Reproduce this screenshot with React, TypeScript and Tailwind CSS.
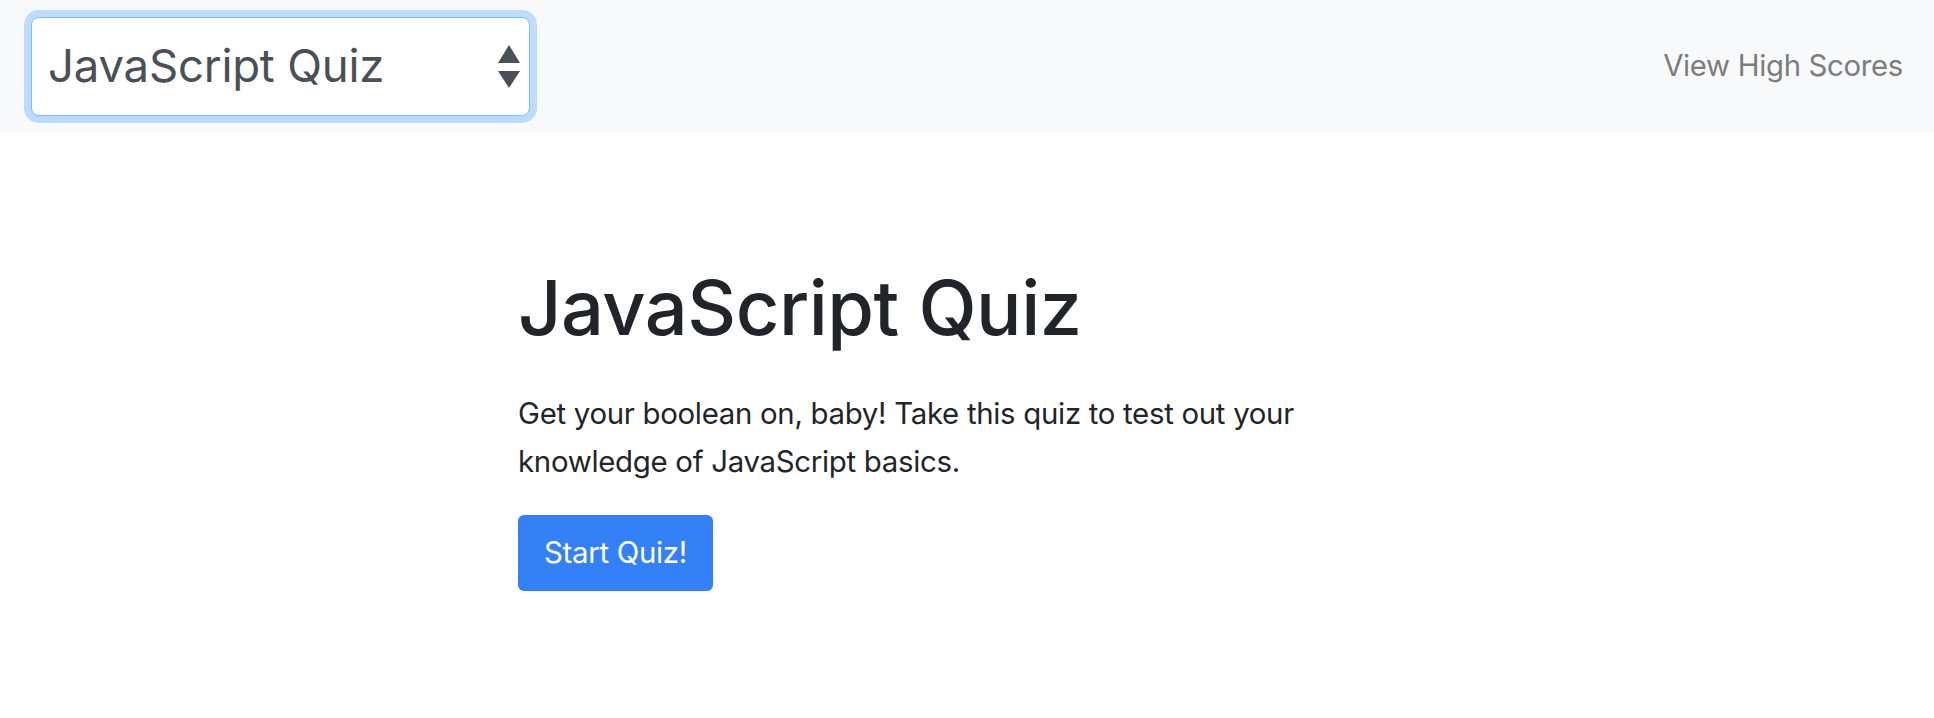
import { useState } from "react";

const quizzes = ["JavaScript Quiz", "HTML Quiz", "CSS Quiz"];

export default function App() {
  const [quiz, setQuiz] = useState(quizzes[0]);

  return (
    <div className="min-h-screen bg-white font-['Inter',_'Noto_Sans',_sans-serif] text-[#212529]">
      {/* Navbar */}
      <nav className="h-[132px] bg-[#f8f9fa] flex items-center justify-between pl-[31px] pr-[31px]">
        <div className="relative">
          <select
            value={quiz}
            onChange={(e) => setQuiz(e.target.value)}
            className="appearance-none w-[499px] h-[99px] bg-white border border-[#80bdff] rounded-[8px] ring-[7px] ring-[#80bdff]/50 outline-none pl-[16px] pr-[40px] text-[45.5px] text-[#495057] tracking-[-0.2px]"
          >
            {quizzes.map((q) => (
              <option key={q} value={q}>{q}</option>
            ))}
          </select>
          <svg
            className="absolute right-[10px] top-[28px] pointer-events-none"
            width="22"
            height="44"
            viewBox="0 0 22 44"
          >
            <path d="M11 0 L22 18 L0 18 Z" fill="#495057" />
            <path d="M0 26 L22 26 L11 43 Z" fill="#495057" />
          </svg>
        </div>
        <a href="#" className="text-[29.3px] text-[#7b7c7d] tracking-[-0.3px]">
          View High Scores
        </a>
      </nav>

      {/* Intro */}
      <main className="w-[898px] mx-auto pt-[130px]">
        <h1 className="text-[75.7px] leading-[92px] font-medium tracking-[-0.5px]">JavaScript Quiz</h1>
        <p className="mt-[36px] text-[29.4px] leading-[48px] tracking-[-0.3px] max-w-[800px]">
          Get your boolean on, baby! Take this quiz to test out your knowledge of JavaScript basics.
        </p>
        <button className="mt-[29px] h-[76px] px-[26px] bg-[#3480f6] text-white text-[29.4px] rounded-[6px] tracking-[-0.3px]">
          Start Quiz!
        </button>
      </main>
    </div>
  );
}
